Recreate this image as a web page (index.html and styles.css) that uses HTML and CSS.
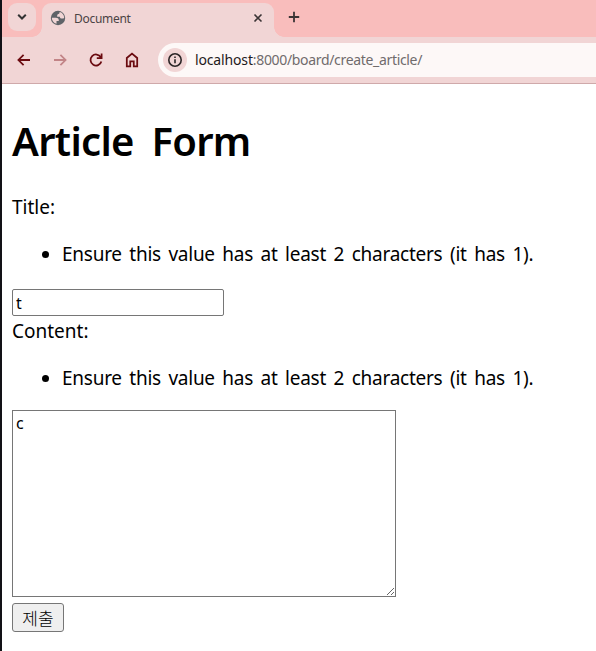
FILE: index.html
```html
<!DOCTYPE html>
<html lang="ko">
<head>
<meta charset="utf-8">
<title>Document</title>
<link rel="stylesheet" href="styles.css">
</head>
<body>
<div class="window">
  <header class="tabstrip">
    <div class="tab-search">
      <svg width="28" height="28" viewBox="0 0 28 28"><path d="M10.200 11.800l3.800 3.700 3.800-3.700" fill="none" stroke="#333" stroke-width="2"/></svg>
    </div>
    <div class="tab">
      <svg class="globe" width="16" height="16" viewBox="0 0 16 16"><circle cx="8" cy="8" r="7.200" fill="#5f6368"/><path d="M1.800 7.700h4c2.200 0 3.300 1.200 3 3.300H6.500v2.700C3.700 13 1.800 10.700 1.800 7.700z" fill="#f1d5d5"/><path d="M9.900 2.100c2.500.8 4.200 3.100 4.300 5.800-.6.500-1.200.7-2 .7-1.500 0-2.300-.6-2.400-1.900H7.200c-.2-2 .5-2.900 2-2.900 0-.8.200-1.300.7-1.700z" fill="#f1d5d5"/></svg>
      <span class="tab-title">Document</span>
      <svg class="close" width="10" height="10" viewBox="0 0 10 10"><path d="M1.500 1.500l7 7m0-7l-7 7" stroke="#3b3435" stroke-width="1.600"/></svg>
    </div>
    <svg class="new-tab" width="12" height="12" viewBox="0 0 12 12"><path d="M6 .8v10.400M.8 6h10.400" stroke="#3b3435" stroke-width="1.800"/></svg>
  </header>
  <nav class="toolbar">
    <svg class="icon" viewBox="2 2 20 20"><path d="M19.500 12H5.500m6-6.500L5 12l6.500 6.500"/></svg>
    <svg class="icon disabled" viewBox="2 2 20 20"><path d="M4.500 12h14m-6-6.500L19 12l-6.500 6.500"/></svg>
    <svg class="icon" viewBox="2 2 20 20"><path d="M18 8.500A6.900 6.900 0 1 0 18.700 13.800M19 4v5.800h-6"/></svg>
    <svg class="icon" viewBox="2 2 20 20"><path d="M5.500 20V9.500L12 4l6.500 5.500V20h-4.300v-6.200H9.800V20z"/></svg>
    <div class="address">
      <span class="info"><svg width="16" height="16" viewBox="0 0 16 16"><circle cx="8" cy="8" r="6.200" fill="none" stroke="#2b2526" stroke-width="1.600"/><path d="M8 7.200v4M8 4.500v1.600" stroke="#2b2526" stroke-width="1.600"/></svg></span>
      <span class="url"><b>localhost</b>:8000/board/create_article/</span>
    </div>
  </nav>
  <main>
    <h1>Article Form</h1>
    <form>
      <label for="title">Title:</label>
      <ul><li>Ensure this value has at least 2 characters (it has 1).</li></ul>
      <input id="title" type="text" value="t">
      <label for="content">Content:</label>
      <ul class="content-errors"><li>Ensure this value has at least 2 characters (it has 1).</li></ul>
      <textarea id="content">c</textarea>
      <button type="button">제출</button>
    </form>
  </main>
</div>
</body>
</html>
```
FILE: styles.css
```css
* { box-sizing: border-box; }
body { margin: 0; background: #fff; color: #000; font-family: "Noto Sans", "Noto Sans CJK KR", sans-serif; overflow: hidden; }
.window { height: 651px; border-left: 2px solid #121116; }
.tabstrip { display: flex; height: 37px; padding: 3px 0 0 6px; background: #f9bdbc; }
.tab-search { width: 28px; height: 28px; border-radius: 9px; background: #f1d5d5; }
.tab-search svg, .tab svg { display: block; }
.tab { position: relative; display: flex; align-items: center; width: 232px; height: 34px; margin-left: 6px; padding: 0 11px 4px 8px; border-radius: 9px 9px 0 0; background: #f1d5d5; }
.tab::before, .tab::after { content: ""; position: absolute; bottom: 0; width: 10px; height: 10px; }
.tab::before { left: -10px; background: radial-gradient(circle at 0 0, transparent 9.500px, #f1d5d5 10px); }
.tab::after { right: -10px; background: radial-gradient(circle at 100% 0, transparent 9.500px, #f1d5d5 10px); }
.tab-title { flex: 1; margin-left: 8px; padding-top: 1px; font-size: 12px; line-height: 16px; color: #4b4344; letter-spacing: -.3px; }
.new-tab { margin: 8px 0 0 14px; }
.toolbar { display: flex; align-items: center; height: 47px; padding: 0 0 1px 14px; background: #f1d5d5; border-bottom: 1px solid #cfa9aa; }
.icon { flex: none; width: 16px; height: 16px; margin-right: 20px; fill: none; stroke: #6b0b10; stroke-width: 2.200; }
.icon.disabled { stroke: #c28487; }
.address { display: flex; align-items: center; flex: 1; height: 34px; margin-left: -2px; padding-left: 5px; border-radius: 17px 0 0 17px; background: #fdf8f7; }
.info { display: grid; place-items: center; width: 24px; height: 24px; border-radius: 50%; background: #f1d5d5; }
.url { margin-left: 8px; font-size: 14px; line-height: 20px; color: #706b6c; letter-spacing: -.33px; }
.url b { color: #1f1a1b; font-weight: 400; letter-spacing: -.15px; }
main { padding: 30px 10px 0; font-size: 19px; line-height: 27px; }
h1 { margin: 0 0 53px; font-size: 40px; line-height: 53px; font-weight: 600; height: 27px; letter-spacing: -.700px; word-spacing: 8px; }
label { display: block; height: 27px; }
ul { margin: 20px 0 21px; padding-left: 50px; }
.content-errors { margin-bottom: 18px; }
li { height: 27px; white-space: nowrap; letter-spacing: -.25px; word-spacing: 2.800px; }
input { display: block; width: 212px; height: 27px; margin: 0 0 2px; padding: 1px 3px; border: 1px solid #767676; border-radius: 2px; background: #fff; font: 16px/22px "Noto Sans", sans-serif; }
textarea { display: block; width: 384px; height: 187px; margin: 0 0 6px; padding: 1px 3px; border: 1px solid #767676; background: #fff; font: 16px/22px "Noto Sans", sans-serif; resize: both; }
button { display: block; width: 52px; height: 29px; padding: 0; border: 1px solid #767676; border-radius: 3px; background: #efefef; color: #000; font: 300 17px/25px "Noto Sans CJK KR", sans-serif; }
```
